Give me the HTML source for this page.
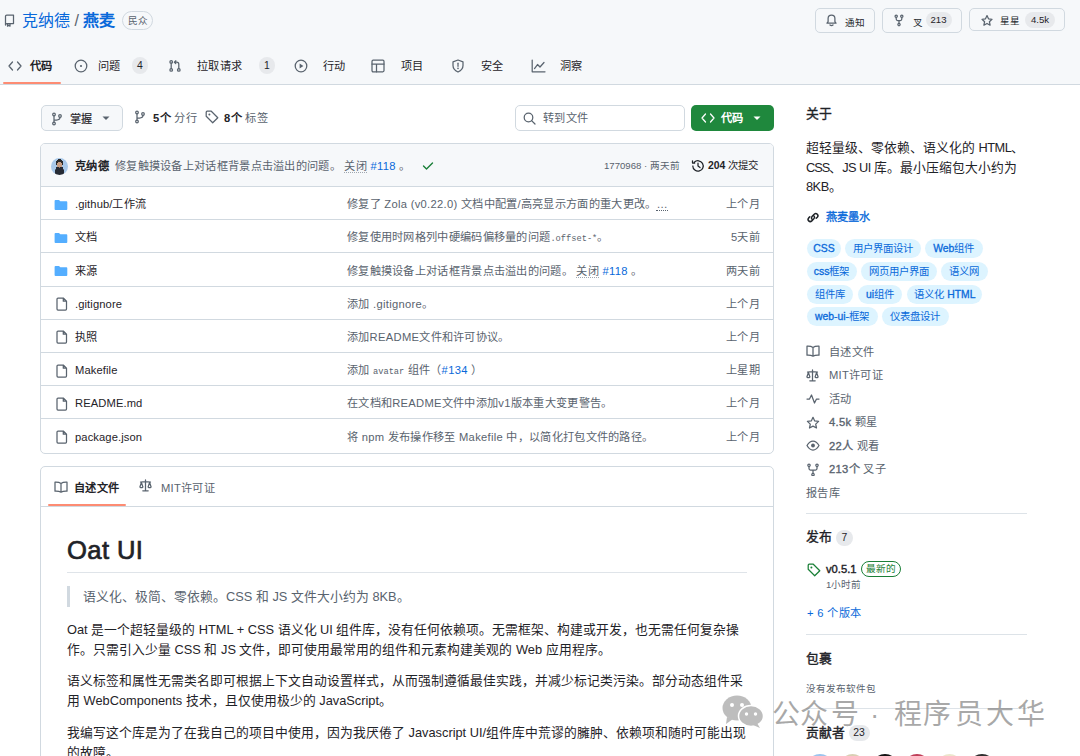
<!DOCTYPE html>
<html lang="zh-CN"><head><meta charset="utf-8">
<style>
*{box-sizing:border-box;margin:0;padding:0}
html,body{width:1080px;height:756px;overflow:hidden;background:#fff}
body{font-family:"Liberation Sans",sans-serif;color:#1f2328;font-size:11.2px;position:relative}
.abs{position:absolute}
svg{display:block;position:absolute}
.ic{fill:none;stroke:#59636e;stroke-width:1.25;stroke-linecap:round;stroke-linejoin:round}
#hdr{position:absolute;left:0;top:0;width:1080px;height:85px;background:#f6f8fa;border-bottom:1px solid #d1d9e0}
.title{position:absolute;left:22px;top:10px;font-size:16px;line-height:22px;color:#0969da;white-space:nowrap}
.title b{font-weight:700}
.title i{font-style:normal;color:#59636e}
.pub{position:absolute;left:122px;top:11px;width:31px;height:19px;border:1px solid #d1d9e0;border-radius:10px;font-size:9.6px;color:#59636e;line-height:18px;text-align:center}
.btn{position:absolute;top:8px;height:25px;border:1px solid #d1d9e0;border-radius:5px;background:#f6f8fa;font-size:9.6px;color:#25292e}
.btn span{position:absolute;top:5px;line-height:14px;white-space:nowrap}
.cnt{position:absolute;top:3px;height:16px;background:#e7e9ec;border-radius:8px;font-size:9.6px;line-height:16px;text-align:center;color:#1f2328}
.tab{position:absolute;top:58px;font-size:11.2px;letter-spacing:.35px;line-height:16px;color:#1f2328;white-space:nowrap}
.tabc{position:absolute;top:57px;height:17px;min-width:16px;border-radius:9px;background:#e7e9ec;font-size:10.4px;line-height:17px;text-align:center;color:#1f2328}
/* main */
.mbtn{position:absolute;top:105px;height:26px;border:1px solid #d1d9e0;border-radius:5px;background:#f6f8fa}
.t{position:absolute;white-space:nowrap;line-height:16px;letter-spacing:.3px}
#box{position:absolute;left:40px;top:143px;width:734px;height:311px;border:1px solid #d1d9e0;border-radius:5px;overflow:hidden}
#chead{position:absolute;left:0;top:0;width:100%;height:43px;background:#f6f8fa;border-bottom:1px solid #d1d9e0}
.row{position:absolute;left:0;width:100%;height:33.3px;border-top:1px solid #d1d9e0}
.row .n{letter-spacing:.1px;position:absolute;left:34px;top:9.3px;line-height:16px;font-size:11.2px;color:#1f2328;white-space:nowrap}
.row .m{letter-spacing:.3px;position:absolute;left:306px;top:9.3px;line-height:16px;font-size:11.2px;color:#59636e;white-space:nowrap}
.row .d{letter-spacing:.3px;position:absolute;right:13px;top:9.3px;line-height:16px;font-size:11.2px;color:#59636e;white-space:nowrap}
.row svg{left:13px;top:12px}
code,.mono{font-family:"Liberation Mono",monospace;font-size:8.7px;letter-spacing:0}
a,.lnk{color:#0969da;text-decoration:none}
#readme{position:absolute;left:40px;top:466px;width:734px;height:320px;border:1px solid #d1d9e0;border-radius:5px}
.md{position:absolute;left:67px;font-size:12.8px;line-height:20px;color:#1f2328;width:690px}
/* sidebar */
.sb{position:absolute;left:806px;white-space:nowrap}
.sbh{font-size:12.8px;font-weight:400;-webkit-text-stroke:.4px;line-height:18px;color:#1f2328}
.topic{position:absolute;height:19px;border-radius:10px;background:#ddf4ff;color:#0969da;font-size:10.4px;font-weight:400;line-height:19px;text-align:center;white-space:nowrap}
.sl{position:absolute;letter-spacing:.3px;left:829px;font-size:11.2px;line-height:16px;color:#59636e;white-space:nowrap}
.sl b{color:#59636e;font-weight:400;-webkit-text-stroke:.35px}
.hr{position:absolute;left:806px;width:221px;height:1px;background:#dde3e8}
</style></head><body>
<div id="hdr">
  <svg style="left:3.5px;top:14px" width="11" height="13" viewBox="0 0 11 13"><path class="ic" d="M1.5 11V2.2Q1.5 1 2.7 1H9.5V9.5H2.7Q1.5 9.5 1.5 10.7M3.5 9.5V12.2L4.8 11.2L6 12.2V9.5"/></svg>
  <div class="title">克纳德 <i>/</i> <b>燕麦</b></div>
  <div class="pub">民众</div>
  <div class="btn" style="left:814.5px;width:60px">
    <svg style="left:9px;top:4px" width="13" height="14" viewBox="0 0 13 14"><path class="ic" d="M2 10.2H11L9.9 8.6V5.6A3.4 3.4 0 0 0 3.1 5.6V8.6ZM5 12Q6.5 13.3 8 12"/></svg>
    <span style="left:29px;top:6.5px">通知</span>
  </div>
  <div class="btn" style="left:881.5px;width:80.5px">
    <svg style="left:10px;top:4.5px" width="12" height="13" viewBox="0 0 12 13"><path class="ic" d="M3.2 3.5V5Q3.2 6.5 4.7 6.5H7.3Q8.8 6.5 8.8 5V3.5M6 6.5V9.3"/><circle class="ic" cx="3.2" cy="2.3" r="1.15"/><circle class="ic" cx="8.8" cy="2.3" r="1.15"/><circle class="ic" cx="6" cy="10.6" r="1.15"/></svg>
    <span style="left:30px;top:7px">叉</span>
    <div class="cnt" style="left:43px;width:26px">213</div>
  </div>
  <div class="btn" style="left:969px;width:96px;height:23px">
    <svg style="left:9.5px;top:4.5px" width="14" height="14" viewBox="0 0 14 14"><path class="ic" d="M7 1.6L8.5 4.8L12 5.3L9.4 7.7L10.1 11.2L7 9.5L3.9 11.2L4.6 7.7L2 5.3L5.5 4.8Z"/></svg>
    <span style="left:30px">星星</span>
    <div class="cnt" style="left:55px;width:30px">4.5k</div>
  </div>
  <div class="abs" style="left:3px;top:82px;width:58px;height:2px;background:#fd8c73;border-radius:1px"></div>
  <svg style="left:7.5px;top:60px" width="14" height="12" viewBox="0 0 14 12"><path class="ic" d="M4.5 2L1 6L4.5 10M9.5 2L13 6L9.5 10"/></svg>
  <div class="tab" style="left:30px;font-weight:700">代码</div>
  <svg style="left:74px;top:59px" width="14" height="14" viewBox="0 0 14 14"><circle class="ic" cx="7" cy="7" r="5.8"/><circle cx="7" cy="7" r="1.1" fill="#59636e"/></svg>
  <div class="tab" style="left:98px">问题</div><div class="tabc" style="left:132px">4</div>
  <svg style="left:167.5px;top:59px" width="14" height="14" viewBox="0 0 14 14"><circle class="ic" cx="3.2" cy="2.9" r="1.3"/><circle class="ic" cx="3.2" cy="10.9" r="1.3"/><circle class="ic" cx="10.8" cy="10.9" r="1.3"/><path class="ic" d="M3.2 4.2V9.6M10.8 9.6V5.3Q10.8 3.2 8.7 3.2H6.4M7.8 1.8L6.4 3.2L7.8 4.6"/></svg>
  <div class="tab" style="left:197px">拉取请求</div><div class="tabc" style="left:259px">1</div>
  <svg style="left:294px;top:59px" width="14" height="14" viewBox="0 0 14 14"><circle class="ic" cx="7" cy="7" r="5.8"/><path d="M5.6 4.6V9.4L9.4 7Z" fill="#59636e"/></svg>
  <div class="tab" style="left:323px">行动</div>
  <svg style="left:371px;top:59px" width="14" height="14" viewBox="0 0 14 14"><rect class="ic" x="1" y="1.2" width="12" height="11.6" rx="1.2"/><path class="ic" d="M1 5H13M5.5 5V12.8"/></svg>
  <div class="tab" style="left:401px">项目</div>
  <svg style="left:451px;top:59px" width="14" height="14" viewBox="0 0 14 14"><path class="ic" d="M7 1L12 2.8V6.5Q12 10.8 7 13Q2 10.8 2 6.5V2.8Z"/><path class="ic" d="M7 4.2V7.3"/><circle cx="7" cy="9.4" r=".8" fill="#59636e"/></svg>
  <div class="tab" style="left:481px">安全</div>
  <svg style="left:531px;top:59px" width="15" height="14" viewBox="0 0 15 14"><path class="ic" d="M1.2 1V12.8H14M3.5 9.5L6.5 5.5L9 8L13 3.5"/></svg>
  <div class="tab" style="left:560px">洞察</div>
</div>

<!-- toolbar -->
<div class="mbtn" style="left:41px;width:82px">
  <svg style="left:9px;top:6px" width="12" height="14" viewBox="0 0 12 14"><circle class="ic" cx="3" cy="2.5" r="1.3"/><circle class="ic" cx="3" cy="11.5" r="1.3"/><circle class="ic" cx="9" cy="4" r="1.3"/><path class="ic" d="M3 3.8V10.2M9 5.3Q9 8 5.5 8H3"/></svg>
  <div class="t" style="left:28px;top:5px;font-size:11.2px;-webkit-text-stroke:.15px">掌握</div>
  <svg style="left:60px;top:10px" width="8" height="5" viewBox="0 0 8 5"><path d="M0.5 0.5H7.5L4 4Z" fill="#59636e"/></svg>
</div>
<svg style="left:134px;top:110px" width="12" height="14" viewBox="0 0 12 14"><circle class="ic" cx="3" cy="2.5" r="1.3"/><circle class="ic" cx="3" cy="11.5" r="1.3"/><circle class="ic" cx="9" cy="4" r="1.3"/><path class="ic" d="M3 3.8V10.2M9 5.3Q9 8 5.5 8H3"/></svg>
<div class="t" style="left:153px;top:110px;font-size:11.2px"><b>5个</b> <span style="color:#59636e">分行</span></div>
<svg style="left:205px;top:110px" width="14" height="14" viewBox="0 0 14 14"><path class="ic" d="M1.2 2.2V6.3L7.7 12.8L12.8 7.7L6.3 1.2H2.2Q1.2 1.2 1.2 2.2Z"/><circle cx="4.4" cy="4.4" r="1" fill="#59636e"/></svg>
<div class="t" style="left:224px;top:110px;font-size:11.2px"><b>8个</b> <span style="color:#59636e">标签</span></div>
<div class="abs" style="left:515px;top:105px;width:170px;height:26px;border:1px solid #d1d9e0;border-radius:5px;background:#fff">
  <svg style="left:7px;top:6px" width="13" height="13" viewBox="0 0 13 13"><circle class="ic" cx="5.5" cy="5.5" r="4.3"/><path class="ic" d="M8.6 8.6L12 12"/></svg>
  <div class="t" style="left:27px;top:4px;color:#59636e;font-size:11.2px">转到文件</div>
</div>
<div class="abs" style="left:691px;top:105px;width:83px;height:26px;border-radius:5px;background:#1f883d">
  <svg style="left:10px;top:7px" width="14" height="12" viewBox="0 0 14 12"><path class="ic" style="stroke:#fff" d="M4.5 2L1 6L4.5 10M9.5 2L13 6L9.5 10"/></svg>
  <div class="t" style="left:30px;top:5px;color:#fff;font-weight:700;font-size:11.2px">代码</div>
  <svg style="left:62px;top:11px" width="8" height="5" viewBox="0 0 8 5"><path d="M0.5 0.5H7.5L4 4Z" fill="#fff"/></svg>
</div>

<!-- file box -->
<div id="box">
  <div id="chead">
    <div class="abs" style="left:10px;top:14px;width:17px;height:17px;border-radius:50%;background:radial-gradient(circle at 50% 40%,#c89f84 0 20%,transparent 21%),radial-gradient(circle at 50% 28%,#2a2a2a 0 24%,transparent 25%),radial-gradient(ellipse at 50% 100%,#262b35 0 40%,transparent 41%),#a9c9ea"></div>
    <div class="t" style="left:34px;top:14px;font-weight:700;font-size:11.2px">克纳德</div>
    <div class="t" style="left:74px;top:14px;color:#59636e;font-size:11.2px">修复触摸设备上对话框背景点击溢出的问题。 <span style="border-bottom:1px dotted #a0a8b0">关闭</span> <a>#118</a> 。</div>
    <svg style="left:381px;top:17px" width="12" height="10" viewBox="0 0 12 10"><path d="M1.5 5L4.5 8L10.5 2" fill="none" stroke="#1a7f37" stroke-width="1.4" stroke-linecap="round" stroke-linejoin="round"/></svg>
    <div class="t" style="left:563px;top:14px;color:#59636e;font-size:9.6px;letter-spacing:0">1770968 · 两天前</div>
    <svg style="left:650px;top:15px" width="14" height="14" viewBox="0 0 14 14"><path class="ic" style="stroke:#1f2328" d="M1.8 7A5.2 5.2 0 1 0 3.3 3.3M1.5 1.8V4H3.7M7 4.2V7L9 8.5"/></svg>
    <div class="t" style="left:667px;top:14px;font-size:10.4px;letter-spacing:0"><b>204</b> 次提交</div>
  </div>
<div class="row" style="top:42.0px"><svg width="14" height="12" viewBox="0 0 14 12"><path d="M0.6 1.9Q0.6 1 1.5 1H5L6.3 2.3H12.4Q13.3 2.3 13.3 3.2V10.1Q13.3 11 12.4 11H1.5Q0.6 11 0.6 10.1Z" fill="#54aeff"/></svg><div class="n">.github/工作流</div><div class="m">修复了 Zola (v0.22.0) 文档中配置/高亮显示方面的重大更改。<span style="border-bottom:1px dotted #59636e">…</span></div><div class="d">上个月</div></div>
<div class="row" style="top:75.2px"><svg width="14" height="12" viewBox="0 0 14 12"><path d="M0.6 1.9Q0.6 1 1.5 1H5L6.3 2.3H12.4Q13.3 2.3 13.3 3.2V10.1Q13.3 11 12.4 11H1.5Q0.6 11 0.6 10.1Z" fill="#54aeff"/></svg><div class="n">文档</div><div class="m">修复使用时网格列中硬编码偏移量的问题<code>.offset-*</code>。</div><div class="d">5天前</div></div>
<div class="row" style="top:108.4px"><svg width="14" height="12" viewBox="0 0 14 12"><path d="M0.6 1.9Q0.6 1 1.5 1H5L6.3 2.3H12.4Q13.3 2.3 13.3 3.2V10.1Q13.3 11 12.4 11H1.5Q0.6 11 0.6 10.1Z" fill="#54aeff"/></svg><div class="n">来源</div><div class="m">修复触摸设备上对话框背景点击溢出的问题。 <span style="border-bottom:1px dotted #a0a8b0">关闭</span> <a>#118</a> 。</div><div class="d">两天前</div></div>
<div class="row" style="top:141.6px"><svg width="12" height="14" viewBox="0 0 12 14" style="left:15px;top:10.5px"><path class="ic" d="M2 1H7.3L10.5 4.2V12Q10.5 13 9.5 13H2Q1 13 1 12V2Q1 1 2 1ZM7.3 1V4.2H10.5"/></svg><div class="n">.gitignore</div><div class="m">添加 .gitignore。</div><div class="d">上个月</div></div>
<div class="row" style="top:174.8px"><svg width="12" height="14" viewBox="0 0 12 14" style="left:15px;top:10.5px"><path class="ic" d="M2 1H7.3L10.5 4.2V12Q10.5 13 9.5 13H2Q1 13 1 12V2Q1 1 2 1ZM7.3 1V4.2H10.5"/></svg><div class="n">执照</div><div class="m">添加README文件和许可协议。</div><div class="d">上个月</div></div>
<div class="row" style="top:208.0px"><svg width="12" height="14" viewBox="0 0 12 14" style="left:15px;top:10.5px"><path class="ic" d="M2 1H7.3L10.5 4.2V12Q10.5 13 9.5 13H2Q1 13 1 12V2Q1 1 2 1ZM7.3 1V4.2H10.5"/></svg><div class="n">Makefile</div><div class="m">添加 <code>avatar</code> 组件（<a>#134</a> ）</div><div class="d">上星期</div></div>
<div class="row" style="top:241.2px"><svg width="12" height="14" viewBox="0 0 12 14" style="left:15px;top:10.5px"><path class="ic" d="M2 1H7.3L10.5 4.2V12Q10.5 13 9.5 13H2Q1 13 1 12V2Q1 1 2 1ZM7.3 1V4.2H10.5"/></svg><div class="n">README.md</div><div class="m">在文档和README文件中添加v1版本重大变更警告。</div><div class="d">上个月</div></div>
<div class="row" style="top:274.4px"><svg width="12" height="14" viewBox="0 0 12 14" style="left:15px;top:10.5px"><path class="ic" d="M2 1H7.3L10.5 4.2V12Q10.5 13 9.5 13H2Q1 13 1 12V2Q1 1 2 1ZM7.3 1V4.2H10.5"/></svg><div class="n">package.json</div><div class="m">将 npm 发布操作移至 Makefile 中，以简化打包文件的路径。</div><div class="d">上个月</div></div>
</div>

<!-- readme -->
<div id="readme">
  <svg style="left:13px;top:13.5px" width="14" height="12" viewBox="0 0 14 12"><path class="ic" d="M7 2.5Q5 1 1 1.2V10.2Q5 10 7 11.2Q9 10 13 10.2V1.2Q9 1 7 2.5ZM7 2.5V11.2"/></svg>
  <div class="t" style="left:33px;top:13px;font-weight:700;font-size:11.2px">自述文件</div>
  <div class="abs" style="left:7px;top:37px;width:78px;height:2px;background:#fd8c73;border-radius:1px"></div>
  <svg style="left:97.5px;top:11.5px" width="14" height="13" viewBox="0 0 14 13"><path class="ic" d="M6.5 0.9V11.8M1.5 3Q6.5 2.2 11.5 3M3.8 11.8H9.2M2.4 3.4L0.9 8Q2.4 9.4 3.9 8ZM10.6 3.4L9.1 8Q10.6 9.4 12.1 8Z"/></svg>
  <div class="t" style="left:120px;top:13px;color:#59636e;font-size:11.2px">MIT许可证</div>
  <div class="abs" style="left:0;top:39px;width:732px;height:1px;background:#d1d9e0"></div>
</div>
<div class="md" style="top:534px;letter-spacing:.4px;font-size:25.6px;line-height:32px;font-weight:400;-webkit-text-stroke:.7px">Oat UI</div>
<div class="abs" style="left:67px;top:572px;width:680px;height:1px;background:#dfe4e9"></div>
<div class="abs" style="left:67px;top:586px;width:3px;height:21px;background:#d1d9e0"></div>
<div class="md" style="left:83px;top:587px;color:#59636e">语义化、极简、零依赖。CSS 和 JS 文件大小约为 8KB。</div>
<div class="md" style="top:620px">Oat 是一个超轻量级的 HTML + CSS 语义化 UI 组件库，没有任何依赖项。无需框架、构建或开发，也无需任何复杂操<br>作。只需引入少量 CSS 和 JS 文件，即可使用最常用的组件和元素构建美观的 Web 应用程序。</div>
<div class="md" style="top:671px">语义标签和属性无需类名即可根据上下文自动设置样式，从而强制遵循最佳实践，并减少标记类污染。部分动态组件采<br>用 WebComponents 技术，且仅使用极少的 JavaScript。</div>
<div class="md" style="top:723px">我编写这个库是为了在我自己的项目中使用，因为我厌倦了 Javascript UI/组件库中荒谬的臃肿、依赖项和随时可能出现<br>的故障。</div>

<!-- sidebar -->
<div class="sb sbh" style="top:105px">关于</div>
<div class="sb" style="top:138px;font-size:12.8px;line-height:19.5px;color:#1f2328">超轻量级、零依赖、语义化的 <span style="letter-spacing:-.5px">HTML</span>、<br><span style="letter-spacing:-1px">CSS</span>、<span style="letter-spacing:-.6px">JS UI </span>库。最小压缩包大小约为<br><span style="letter-spacing:-.5px">8KB</span>。</div>
<svg style="left:806px;top:211px" width="14" height="13" viewBox="0 0 14 13"><path class="ic" style="stroke:#1f2328;stroke-width:1.5" d="M6 8.2Q4.8 7 6 5.5L8.2 3.2Q9.8 1.8 11.3 3.2Q12.7 4.7 11.3 6.2L10.2 7.3M8 5Q9.2 6.2 8 7.6L5.8 9.9Q4.2 11.3 2.7 9.9Q1.3 8.4 2.7 6.9L3.8 5.8"/></svg>
<div class="sb lnk" style="left:826px;top:209px;font-size:11.2px;line-height:16px;font-weight:400;-webkit-text-stroke:.35px">燕麦墨水</div>
<div class="topic" style="left:806.5px;top:239.0px;width:34.8px"><b style="font-size:10.4px;font-weight:400;-webkit-text-stroke:.3px">CSS</b></div>
<div class="topic" style="left:844.6px;top:239.0px;width:76.0px">用户界面设计</div>
<div class="topic" style="left:925.0px;top:239.0px;width:57.5px"><b style="font-size:10.4px;font-weight:400;-webkit-text-stroke:.3px">Web</b>组件</div>
<div class="topic" style="left:806.5px;top:261.8px;width:50.3px"><b style="font-size:10.4px;font-weight:400;-webkit-text-stroke:.3px">css</b>框架</div>
<div class="topic" style="left:861.0px;top:261.8px;width:75.5px">网页用户界面</div>
<div class="topic" style="left:941.0px;top:261.8px;width:46.7px">语义网</div>
<div class="topic" style="left:806.5px;top:284.6px;width:46.3px">组件库</div>
<div class="topic" style="left:857.8px;top:284.6px;width:44.6px"><b style="font-size:10.4px;font-weight:400;-webkit-text-stroke:.3px">ui</b>组件</div>
<div class="topic" style="left:907.4px;top:284.6px;width:75.1px">语义化 <b style="font-size:10.4px;font-weight:400;-webkit-text-stroke:.3px">HTML</b></div>
<div class="topic" style="left:806.5px;top:307.4px;width:71.1px"><b style="font-size:10.4px;font-weight:400;-webkit-text-stroke:.3px">web-ui-</b>框架</div>
<div class="topic" style="left:882.0px;top:307.4px;width:66.7px">仪表盘设计</div>
<svg style="left:806px;top:345.0px" width="14" height="13" viewBox="0 0 14 13"><path class="ic" d="M7 2.5Q5 1 1 1.2V10.2Q5 10 7 11.2Q9 10 13 10.2V1.2Q9 1 7 2.5ZM7 2.5V11.2"/></svg><div class="sl" style="top:343.5px">自述文件</div>
<svg style="left:806px;top:368.5px" width="14" height="13" viewBox="0 0 14 13"><path class="ic" d="M6.5 0.9V11.8M1.5 3Q6.5 2.2 11.5 3M3.8 11.8H9.2M2.4 3.4L0.9 8Q2.4 9.4 3.9 8ZM10.6 3.4L9.1 8Q10.6 9.4 12.1 8Z"/></svg><div class="sl" style="top:367.0px">MIT许可证</div>
<svg style="left:806px;top:392.0px" width="14" height="13" viewBox="0 0 14 13"><path class="ic" d="M1 7H3.5L5.5 3L8.5 11L10.5 7H13"/></svg><div class="sl" style="top:390.5px">活动</div>
<svg style="left:806px;top:415.5px" width="14" height="13" viewBox="0 0 14 13"><path class="ic" d="M7 1.3L8.7 4.9L12.6 5.4L9.7 8.1L10.5 12L7 10.1L3.5 12L4.3 8.1L1.4 5.4L5.3 4.9Z"/></svg><div class="sl" style="top:414.0px"><b>4.5k</b> 颗星</div>
<svg style="left:806px;top:439.0px" width="14" height="13" viewBox="0 0 14 13"><path class="ic" d="M1 6.5Q3.5 2 7 2Q10.5 2 13 6.5Q10.5 11 7 11Q3.5 11 1 6.5Z"/><circle cx="7" cy="6.5" r="1.9" fill="#59636e"/></svg><div class="sl" style="top:437.5px"><b>22人</b> 观看</div>
<svg style="left:806px;top:462.5px" width="14" height="13" viewBox="0 0 14 13"><path class="ic" d="M3 3.5V5.5Q3 7 4.5 7H9.5Q11 7 11 5.5V3.5M7 7V10.2"/><circle class="ic" cx="3" cy="2.3" r="1.2"/><circle class="ic" cx="11" cy="2.3" r="1.2"/><circle class="ic" cx="7" cy="11.5" r="1.2"/></svg><div class="sl" style="top:461.0px"><b>213个</b> 叉子</div>
<div class="sl" style="left:806px;top:484.5px">报告库</div>
<div class="hr" style="top:513px"></div>
<div class="sb sbh" style="top:528px">发布</div>
<div class="abs" style="left:836px;top:530px;width:17px;height:16px;border-radius:8px;background:#e7e9ec;font-size:10.4px;line-height:16px;text-align:center">7</div>
<svg style="left:806.5px;top:563px" width="14" height="14" viewBox="0 0 14 14"><path class="ic" style="stroke:#1a7f37" d="M1.2 2.2V6.3L7.7 12.8L12.8 7.7L6.3 1.2H2.2Q1.2 1.2 1.2 2.2Z"/><circle cx="4.4" cy="4.4" r="1" fill="#1a7f37"/></svg>
<div class="sb" style="left:826px;top:560.5px;font-size:11.2px;line-height:16px;font-weight:400;-webkit-text-stroke:.4px">v0.5.1</div>
<div class="abs" style="left:861px;top:560.5px;width:40px;height:16px;border:1px solid #1a7f37;border-radius:8px;color:#1a7f37;font-size:9.6px;line-height:14px;text-align:center">最新的</div>
<div class="sb" style="left:826px;top:578px;font-size:9.6px;line-height:14px;color:#59636e">1小时前</div>
<div class="sb lnk" style="left:807px;top:605px;font-size:11.2px;line-height:16px;letter-spacing:.35px">+ 6 个版本</div>
<div class="hr" style="top:634px"></div>
<div class="sb sbh" style="top:650px">包裹</div>
<div class="sb" style="top:682px;font-size:9.6px;line-height:14px;color:#59636e">没有发布软件包</div>
<div class="hr" style="top:708px"></div>
<div class="sb sbh" style="top:724px">贡献者</div>
<div class="abs" style="left:848.5px;top:725px;width:21px;height:16px;border-radius:8px;background:#e7e9ec;font-size:10.4px;line-height:16px;text-align:center">23</div>
<div class="abs" style="left:807.2px;top:754px;width:25.6px;height:25.6px;border-radius:50%;background:#9cc4ee"></div>
<div class="abs" style="left:839.6px;top:754px;width:25.6px;height:25.6px;border-radius:50%;background:#d9d0b4"></div>
<div class="abs" style="left:872.0px;top:754px;width:25.6px;height:25.6px;border-radius:50%;background:#141414"></div>
<div class="abs" style="left:904.4px;top:754px;width:25.6px;height:25.6px;border-radius:50%;background:#c0405a"></div>
<div class="abs" style="left:936.8px;top:754px;width:25.6px;height:25.6px;border-radius:50%;background:#ece6cc"></div>
<div class="abs" style="left:969.2px;top:754px;width:25.6px;height:25.6px;border-radius:50%;background:#303030"></div>
<svg style="left:722px;top:695px" width="42" height="33" viewBox="0 0 42 33">
<ellipse cx="15" cy="13" rx="14.5" ry="12.5" fill="#bdbdbd"/><path d="M5 22L4 29L11 24Z" fill="#bdbdbd"/>
<circle cx="10" cy="10" r="2" fill="#fff"/><circle cx="20" cy="10" r="2" fill="#fff"/>
<ellipse cx="29" cy="21" rx="12.5" ry="10.5" stroke="#fff" stroke-width="1.5" fill="#bdbdbd"/><path d="M35 28L38 33L31 30Z" fill="#bdbdbd"/>
<circle cx="24.5" cy="19" r="1.7" fill="#fff"/><circle cx="33.5" cy="19" r="1.7" fill="#fff"/>
</svg>
<div class="abs" style="left:772.2px;top:696.5px;font-size:28px;line-height:36px;color:rgba(135,135,135,.72)">公</div><div class="abs" style="left:799.7px;top:696.5px;font-size:28px;line-height:36px;color:rgba(135,135,135,.72)">众</div><div class="abs" style="left:830.5px;top:696.5px;font-size:28px;line-height:36px;color:rgba(135,135,135,.72)">号</div><div class="abs" style="left:870.0px;top:696.5px;font-size:28px;line-height:36px;color:rgba(135,135,135,.72)">·</div><div class="abs" style="left:893.7px;top:696.5px;font-size:28px;line-height:36px;color:rgba(135,135,135,.72)">程</div><div class="abs" style="left:922.9px;top:696.5px;font-size:28px;line-height:36px;color:rgba(135,135,135,.72)">序</div><div class="abs" style="left:955.3px;top:696.5px;font-size:28px;line-height:36px;color:rgba(135,135,135,.72)">员</div><div class="abs" style="left:986.0px;top:696.5px;font-size:28px;line-height:36px;color:rgba(135,135,135,.72)">大</div><div class="abs" style="left:1016.8px;top:696.5px;font-size:28px;line-height:36px;color:rgba(135,135,135,.72)">华</div>
</body></html>
